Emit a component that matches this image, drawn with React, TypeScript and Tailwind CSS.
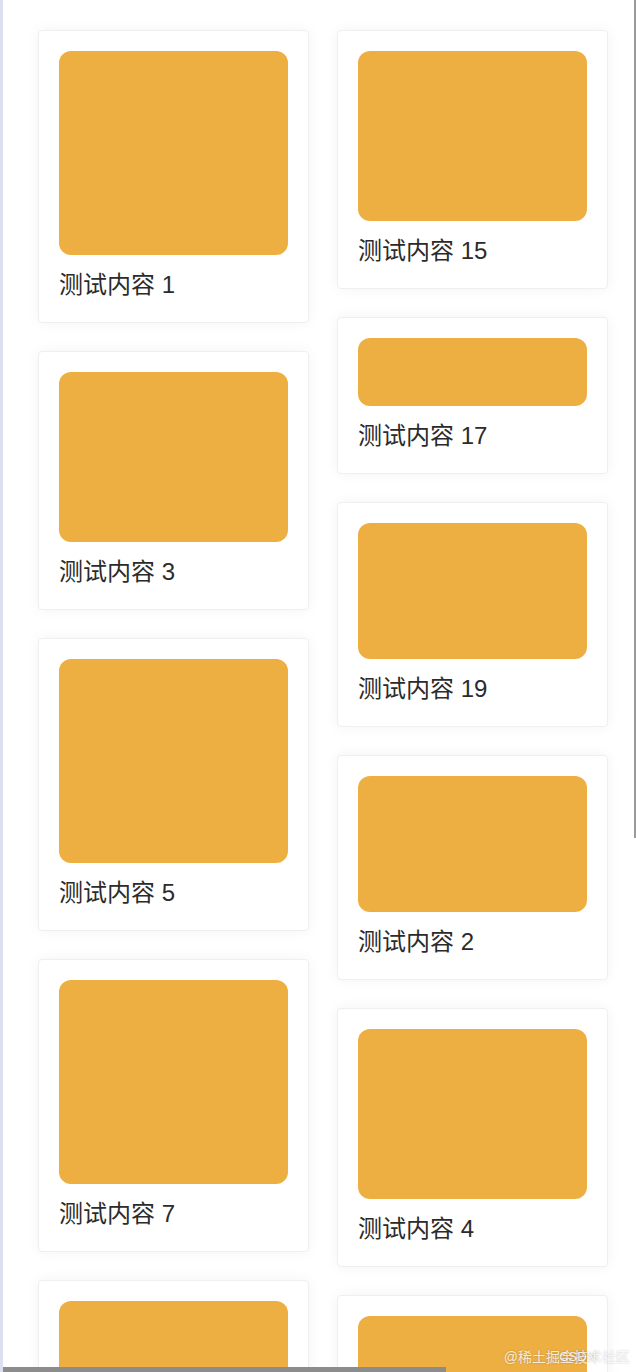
import React from "react";

type Item = { label: string; h: number };

const left: Item[] = [
  { label: "测试内容 1", h: 204 },
  { label: "测试内容 3", h: 170 },
  { label: "测试内容 5", h: 204 },
  { label: "测试内容 7", h: 204 },
  { label: "测试内容 9", h: 204 },
];

const right: Item[] = [
  { label: "测试内容 15", h: 170 },
  { label: "测试内容 17", h: 68 },
  { label: "测试内容 19", h: 136 },
  { label: "测试内容 2", h: 136 },
  { label: "测试内容 4", h: 170 },
  { label: "测试内容 6", h: 170 },
];

function Card({ item }: { item: Item }) {
  return (
    <div className="w-[271px] shrink-0 rounded-[4px] border border-[#efeff1] bg-white px-5 pt-5 pb-[21px] shadow-[0_0_14px_rgba(0,0,0,0.05)]">
      <div className="w-full rounded-[12px] bg-[#eeaf42]" style={{ height: item.h }} />
      <div className="mt-[14px] text-[24px] leading-[32px] text-[#2b2b2b]">{item.label}</div>
    </div>
  );
}

export default function App() {
  return (
    <div
      className="relative h-[1372px] w-[636px] overflow-hidden border-l-[3px] border-[#dcdff0] bg-white"
      style={{ fontFamily: '"Liberation Sans", "Noto Sans CJK SC", sans-serif' }}
    >
      <div className="flex gap-[28px] pl-[35px] pt-[30px]">
        <div className="flex flex-col gap-[28px]">
          {left.map((it) => (
            <Card key={it.label} item={it} />
          ))}
        </div>
        <div className="flex flex-col gap-[28px]">
          {right.map((it) => (
            <Card key={it.label} item={it} />
          ))}
        </div>
      </div>
      <div className="absolute right-0 top-0 h-[838px] w-[2px] bg-[#9a9a9a]" />
      <div className="absolute bottom-0 left-[-3px] h-[5px] w-[446px] bg-[#8c8c8c]" />
      <div className="absolute bottom-[6px] right-[6px] text-[14px] leading-[18px] text-white/80 [text-shadow:0_0_2px_rgba(0,0,0,0.25)]">
        @稀土掘金技术社区
      </div>
      <div className="absolute bottom-[7px] right-[40px] text-[13px] leading-[16px] text-white/85 [text-shadow:0_0_2px_rgba(0,0,0,0.3)]">
        CSDN
      </div>
    </div>
  );
}
